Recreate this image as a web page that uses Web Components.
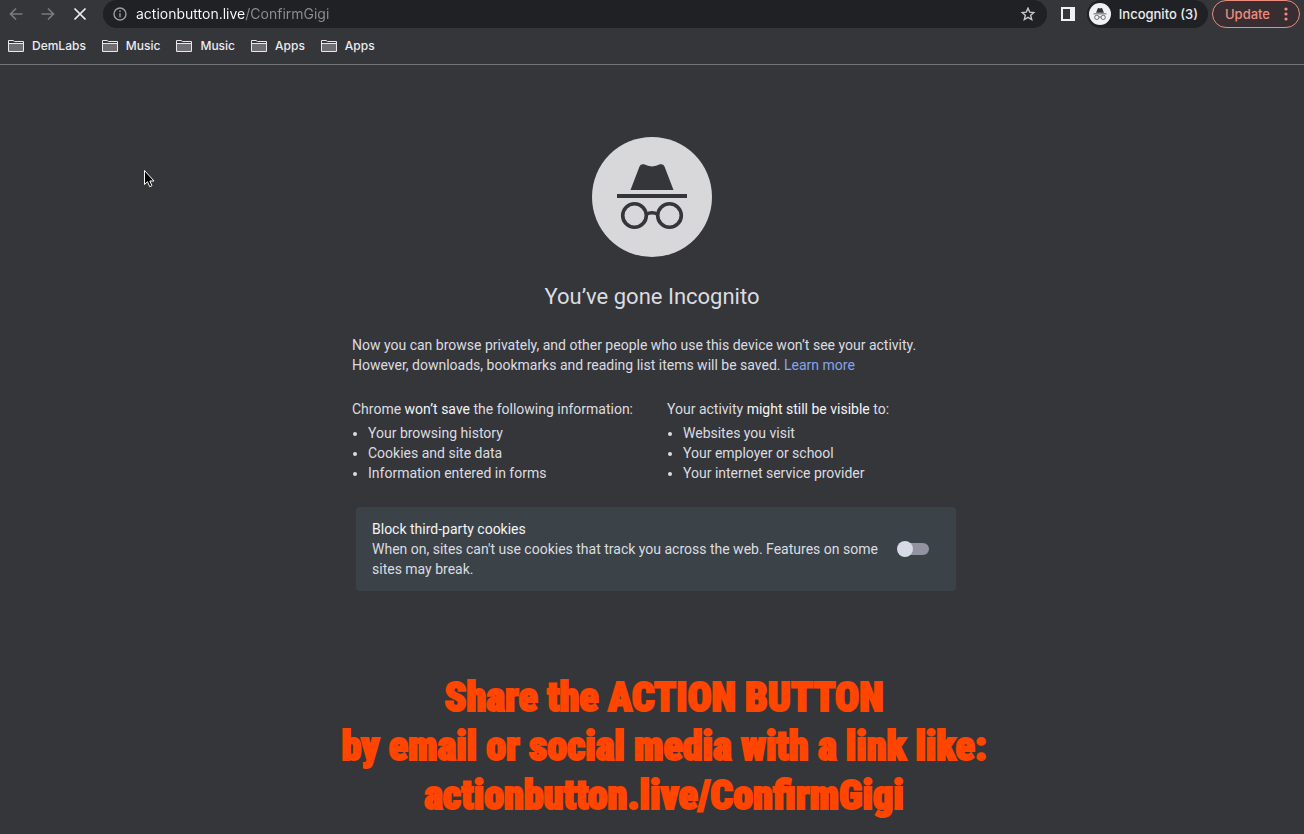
<!DOCTYPE html>
<html lang="en">
<head>
<meta charset="utf-8">
<meta name="viewport" content="width=device-width, initial-scale=1">
<title>New Incognito Tab</title>
<style>
    html {
        background: #35363a;
    }
    body {
        margin: 0;
        color: #dcdce0;
        font: 14px/20px Roboto, sans-serif;
    }
</style>
</head>
<body>
<browser-bar>
    <nav-button slot="nav" label="Back" icon="back" disabled></nav-button>
    <nav-button slot="nav" label="Forward" icon="forward" disabled></nav-button>
    <nav-button slot="nav" label="Stop loading" icon="stop"></nav-button>
    <address-box slot="address" value="actionbutton.live/ConfirmGigi"></address-box>
    <browser-tools slot="tools"></browser-tools>
    <book-mark slot="bookmarks">DemLabs</book-mark>
    <book-mark slot="bookmarks">Music</book-mark>
    <book-mark slot="bookmarks">Music</book-mark>
    <book-mark slot="bookmarks">Apps</book-mark>
    <book-mark slot="bookmarks">Apps</book-mark>
</browser-bar>
<incognito-page>
    <info-list>
        <span slot="header">Chrome <strong>won’t save</strong> the following information:</span>
        <li>Your browsing history</li>
        <li>Cookies and site data</li>
        <li>Information entered in forms</li>
    </info-list>
    <info-list>
        <span slot="header">Your activity <strong>might still be visible</strong> to:</span>
        <li>Websites you visit</li>
        <li>Your employer or school</li>
        <li>Your internet service provider</li>
    </info-list>
    <cookie-control slot="control"></cookie-control>
</incognito-page>
<share-caption>Share the ACTION BUTTON<br>by email or social media with a link like:<br>actionbutton.live/ConfirmGigi</share-caption>
<mouse-pointer></mouse-pointer>

<script>
/**
 * Define an element whose shadow root is cloned from the given markup.
 * @param {String} name
 * @param {String} html
 * @param {Function} setup Called with the host once it is connected
 */
function define (name, html, setup) {
    const template = document.createElement('template');
    template.innerHTML = html;

    window.customElements.define(name, class extends HTMLElement {
        constructor () {
            super();
            this.attachShadow({ mode: 'open' });
            this.shadowRoot.appendChild(template.content.cloneNode(true));
        }

        connectedCallback () {
            if (setup) {
                setup(this, this.shadowRoot);
            }
        }
    });
}

const icons = {
    back: '<path d="M14.5 8H2.5M8 2.5 2.5 8 8 13.5"/>',
    forward: '<path d="M1.5 8h12M8 2.5 13.5 8 8 13.5"/>',
    stop: '<path d="m2.5 2.5 11 11m0-11-11 11"/>'
};

// Hat, brim and glasses, drawn in a 120 unit circle.
const incognito = `
    <circle cx="60" cy="60" r="60" fill="var(--disc, #d8d8da)"/>
    <path fill="#35363a" d="M38.500 53 47.500 29.500Q48.800 26.500 52 27.300 60 31.500 68 27.300 71.200 26.500 72.500 29.500L81.500 53ZM25 57h70v4H25z"/>
    <g fill="none" stroke="#35363a" stroke-width="3.600">
        <circle cx="42.500" cy="78.500" r="11.800"/>
        <circle cx="77.500" cy="78.500" r="11.800"/>
        <path d="M54 77.500q6-3.500 12 0"/>
    </g>`;

define('browser-bar', `
<style>
    :host {
        display: block;
        border-bottom: 1px solid #737477;
        font: 500 12px/16px Inter, sans-serif;
    }
    .toolbar {
        display: flex;
        align-items: center;
        height: 28px;
        padding-right: 4px;
    }
    .address {
        flex: 1;
        min-width: 0;
        margin: 0 6px 0 7px;
    }
    nav {
        display: flex;
        align-items: center;
        gap: 16px;
        height: 36px;
        padding: 0 8px;
    }
</style>
<div class="toolbar">
    <slot name="nav"></slot>
    <div class="address"><slot name="address"></slot></div>
    <slot name="tools"></slot>
</div>
<nav aria-label="Bookmarks"><slot name="bookmarks"></slot></nav>
`);

define('nav-button', `
<style>
    :host {
        display: block;
    }
    button {
        display: grid;
        place-items: center;
        width: 32px;
        height: 28px;
        padding: 0;
        border: 0;
        background: none;
        color: #f1f1f3;
    }
    button:disabled {
        color: #797a7e;
    }
    svg {
        width: 16px;
        height: 16px;
        fill: none;
        stroke: currentColor;
        stroke-width: 1.7;
    }
</style>
<button type="button"><svg viewBox="0 0 16 16" aria-hidden="true"></svg></button>
`, (host, root) => {
    const button = root.querySelector('button');
    button.setAttribute('aria-label', host.getAttribute('label'));
    button.disabled = host.hasAttribute('disabled');
    root.querySelector('svg').innerHTML = icons[host.getAttribute('icon')];
});

define('address-box', `
<style>
    :host {
        display: flex;
        align-items: center;
        height: 28px;
        padding: 0 12px 0 10px;
        border-radius: 14px;
        background: #202124;
        color: #9c9da1;
    }
    svg {
        flex: none;
        width: 14px;
        height: 14px;
        fill: none;
        stroke: currentColor;
        stroke-width: 1.4;
    }
    input {
        flex: 1;
        min-width: 0;
        margin-left: 9px;
        padding: 0;
        border: 0;
        outline: 0;
        /* host name is bright, the path after it is dimmed */
        background: linear-gradient(90deg, #fff var(--host-width, 110px), #8e8f93 0);
        -webkit-background-clip: text;
        background-clip: text;
        -webkit-text-fill-color: transparent;
        font: 400 14px/20px Inter, sans-serif;
    }
    button {
        display: flex;
        padding: 0;
        border: 0;
        background: none;
        color: #c8c9cc;
    }
</style>
<svg viewBox="0 0 14 14" aria-hidden="true"><circle cx="7" cy="7" r="6"/><path d="M7 6.200v4M7 3.500v1.500"/></svg>
<input type="text" aria-label="Address and search bar" spellcheck="false">
<button type="button" aria-label="Bookmark this tab">
    <svg viewBox="0 0 14 14"><path d="m7 1.200 1.700 3.900 4.200.4-3.200 2.800 1 4.200L7 10.300l-3.700 2.200 1-4.200L1.100 5.500l4.200-.4z"/></svg>
</button>
`, (host, root) => {
    const input = root.querySelector('input');
    const value = host.getAttribute('value');
    input.value = value;

    const context = document.createElement('canvas').getContext('2d');
    context.font = '400 14px Inter, sans-serif';
    const width = Math.round(context.measureText(value.split('/')[0]).width);
    input.style.setProperty('--host-width', `${width}px`);
});

define('browser-tools', `
<style>
    :host {
        display: flex;
        align-items: center;
        gap: 4px;
        font-size: 13px;
    }
    button {
        display: flex;
        align-items: center;
        height: 28px;
        padding: 0;
        border: 0;
        border-radius: 14px;
        background: none;
        color: #ececef;
        font: inherit;
    }
    .panel {
        padding: 0 8px;
    }
    .profile {
        gap: 8px;
        padding: 0 10px 0 2px;
        background: #202124;
    }
    .update {
        gap: 14px;
        padding: 0 11px 0 12px;
        border: 1px solid #ee8c80;
        background: #382d30;
        color: #ee8c80;
    }
</style>
<button class="panel" type="button" aria-label="Side panel">
    <svg width="14" height="14" viewBox="0 0 14 14"><path fill="#f1f1f3" fill-rule="evenodd" d="M0 0h14v14H0zM2 2v10h7V2z"/></svg>
</button>
<button class="profile" type="button">
    <svg style="--disc: #f1f1f3" width="22" height="22" viewBox="0 0 120 120" aria-hidden="true">${incognito}</svg>
    <span>Incognito (3)</span>
</button>
<button class="update" type="button">
    <span>Update</span>
    <svg width="4" height="14" viewBox="0 0 4 14" fill="currentColor" aria-hidden="true"><circle cx="2" cy="2" r="1.600"/><circle cx="2" cy="7" r="1.600"/><circle cx="2" cy="12" r="1.600"/></svg>
</button>
`);

define('book-mark', `
<style>
    :host {
        display: block;
    }
    a {
        display: flex;
        align-items: center;
        gap: 8px;
        color: #ececef;
        text-decoration: none;
    }
</style>
<a href="#">
    <svg width="16" height="14" viewBox="0 0 16 14" aria-hidden="true">
        <path d="M.5 12.500V1.500H5L6.500 2.500h9v10z" fill="#35363a" stroke="#e8e8ea"/>
        <path d="M1 5h14v7H1z" fill="#706d70"/>
        <path d="M1 4.500h14" stroke="#e8e8ea"/>
    </svg>
    <slot></slot>
</a>
`);

define('incognito-page', `
<style>
    :host {
        display: block;
        box-sizing: border-box;
        max-width: 608px;
        margin: 0 auto;
        padding-top: 72px;
    }
    .logo {
        display: block;
        width: 120px;
        height: 120px;
        margin: 0 auto;
    }
    h1 {
        margin: 24px 0 22px;
        font-size: 22px;
        font-weight: 400;
        line-height: 32px;
        text-align: center;
    }
    p {
        margin: 0 4px 24px;
    }
    a {
        color: #86a3ec;
        text-decoration: none;
    }
    .lists {
        display: grid;
        grid-template-columns: 1fr 1fr;
        gap: 30px;
        margin: 0 4px 24px;
    }
</style>
<main>
    <svg class="logo" viewBox="0 0 120 120" role="img" aria-label="Incognito">${incognito}</svg>
    <h1>You’ve gone Incognito</h1>
    <p>Now you can browse privately, and other people who use this device won’t see your activity.<br>However, downloads, bookmarks and reading list items will be saved. <a href="#">Learn more</a></p>
    <div class="lists"><slot></slot></div>
    <slot name="control"></slot>
</main>
`);

define('info-list', `
<style>
    :host {
        display: block;
        white-space: nowrap;
    }
    ul {
        margin: 4px 0 0;
        padding-left: 16px;
    }
    ::slotted(span) {
        color: #dcdce0;
    }
</style>
<slot name="header"></slot>
<ul><slot></slot></ul>
`, (host) => {
    host.querySelectorAll('strong').forEach((el) => {
        el.style.fontWeight = '400';
        el.style.color = '#f4f4f6';
    });
});

define('cookie-control', `
<style>
    :host {
        display: flex;
        align-items: center;
        gap: 16px;
        margin-left: 8px;
        padding: 12px 27px 12px 16px;
        border-radius: 4px;
        background: #3b4348;
    }
    label {
        flex: 1;
    }
    strong {
        display: block;
        color: #f4f4f6;
        font-weight: 400;
    }
    input {
        appearance: none;
        display: flex;
        align-items: center;
        flex: none;
        width: 28px;
        height: 12px;
        margin: 0;
        border-radius: 6px;
        background: #9194a0;
    }
    input::before {
        content: "";
        width: 16px;
        height: 16px;
        margin-left: -4px;
        border-radius: 50%;
        background: #d8dae5;
    }
    input:checked {
        justify-content: flex-end;
    }
</style>
<label for="block"><strong>Block third-party cookies</strong>When on, sites can't use cookies that track you across the web. Features on some sites may break.</label>
<input id="block" type="checkbox" role="switch">
`);

define('share-caption', `
<style>
    :host {
        display: block;
        margin-top: 82px;
        padding-left: 24px;
        color: #ff4500;
        font: 900 40px/49px Impact, "Roboto Condensed", sans-serif;
        text-align: center;
        -webkit-text-stroke: 2px #ff4500;
    }
</style>
<slot></slot>
`);

define('mouse-pointer', `
<style>
    :host {
        position: absolute;
        top: 169px;
        left: 143px;
        pointer-events: none;
    }
    svg {
        display: block;
    }
</style>
<svg width="13" height="20" viewBox="0 0 13 20" aria-hidden="true"><path d="M1.500 1.500v14l3-2.800 2.200 5 2.300-1-2.200-4.700h4.200z" fill="#000" stroke="#fff"/></svg>
`);
</script>
</body>
</html>
